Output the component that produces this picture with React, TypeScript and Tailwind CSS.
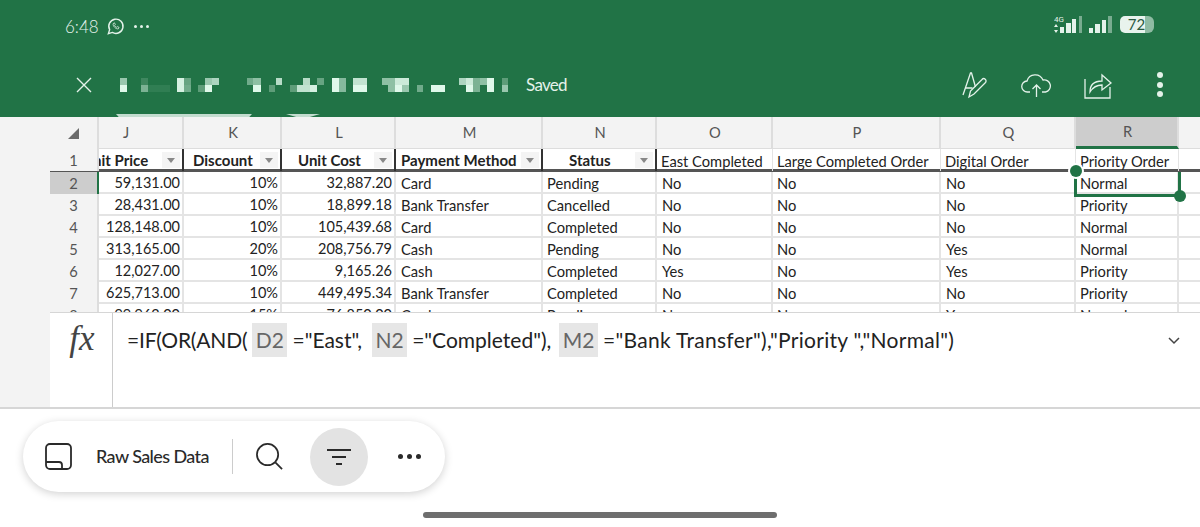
const columns = [
  { id: 'J', title: 'nit Price', filter: true, cls: '' },
  { id: 'K', title: 'Discount', filter: true, cls: 'pl-[9px]' },
  { id: 'L', title: 'Unit Cost', filter: true, cls: 'pl-[16px]' },
  { id: 'M', title: 'Payment Method', filter: true, cls: 'pl-[5px]' },
  { id: 'N', title: 'Status', filter: true, cls: 'pl-[26px]' },
  { id: 'O', title: 'East Completed', filter: false, cls: '' },
  { id: 'P', title: 'Large Completed Order', filter: false, cls: '' },
  { id: 'Q', title: 'Digital Order', filter: false, cls: '' },
  { id: 'R', title: 'Priority Order', filter: false, cls: '' },
];

const rows = [
  ['59,131.00', '10%', '32,887.20', 'Card', 'Pending', 'No', 'No', 'No', 'Normal'],
  ['28,431.00', '10%', '18,899.18', 'Bank Transfer', 'Cancelled', 'No', 'No', 'No', 'Priority'],
  ['128,148.00', '10%', '105,439.68', 'Card', 'Completed', 'No', 'No', 'No', 'Normal'],
  ['313,165.00', '20%', '208,756.79', 'Cash', 'Pending', 'No', 'No', 'Yes', 'Normal'],
  ['12,027.00', '10%', '9,165.26', 'Cash', 'Completed', 'Yes', 'No', 'Yes', 'Priority'],
  ['625,713.00', '10%', '449,495.34', 'Bank Transfer', 'Completed', 'No', 'No', 'No', 'Priority'],
  ['99,962.00', '15%', '76,850.00', 'Card', 'Pending', 'No', 'No', 'Yes', 'Normal'],
];

const gridCols = 'grid grid-cols-[49px_85px_98px_114px_147px_114px_116px_168px_135px_103px_1fr]';

function FilterButton() {
  return (
    <span className="absolute right-[2px] top-[3px] flex h-[16px] w-[18px] items-center justify-center bg-[#f4f4f4]">
      <span className="h-0 w-0 border-x-[4px] border-t-[5px] border-x-transparent border-t-[#888]" />
    </span>
  );
}

function Sheet() {
  return (
    <div className="h-[195px] overflow-hidden bg-white text-[14.7px] text-[#222]">
      <div className={`${gridCols} h-[32px] bg-[#f3f3f3] text-[#555]`}>
        <div className="flex items-center justify-center border-r-2 border-[#ddd]">
          <span className="h-0 w-0 border-b-[11px] border-l-[11px] border-b-[#6b6b6b] border-l-transparent" />
        </div>
        {columns.map((c) => (
          <div
            key={c.id}
            className={`flex items-center border-r-2 border-[#ddd] ${c.id === 'J' ? 'justify-start pl-[24px]' : 'justify-center pl-[2px]'} ${c.id === 'R' ? 'border-b-[3px] border-b-[#217346] bg-[#cdcdcd]' : 'border-b border-b-[#ddd]'}`}
          >
            {c.id}
          </div>
        ))}
        <div className="border-b border-[#ddd]" />
      </div>

      <div className={`${gridCols} h-[23px] border-b-[3px] border-[#555]`}>
        <div className="flex items-center justify-center border-r-2 border-[#ddd] bg-[#f3f3f3] text-[#555]">1</div>
        {columns.map((c) => (
          <div
            key={c.id}
            className={`relative flex items-center overflow-hidden whitespace-nowrap ${c.filter ? 'border-r-2 border-[#333] text-[15px] font-bold' : 'border-r border-[#e4e4e4] pl-[4px] pt-[2px]'} ${c.cls}`}
          >
            <span className={c.id === 'J' ? '-ml-[6px]' : ''}>{c.title}</span>
            {c.filter && <FilterButton />}
          </div>
        ))}
        <div />
      </div>

      {rows.map((row, i) => (
        <div key={i} className={`${gridCols} h-[22px] border-b-2 border-[#e4e4e4]`}>
          <div className={`flex items-center justify-center border-r-2 border-[#ddd] text-[#555] ${i === 0 ? 'bg-[#cdcdcd]' : 'bg-[#f3f3f3]'}`}>
            {i + 2}
          </div>
          {row.map((v, j) => (
            <div
              key={j}
              className={`relative flex items-center whitespace-nowrap border-r-2 border-[#e4e4e4] ${j < 3 ? 'justify-end pr-[2px] text-[14.5px]' : j === 3 || j === 5 || j === 7 ? 'pl-[5px]' : 'pl-[4px]'}`}
            >
              {v}
              {i === 0 && j === 0 && <span className="absolute -left-[2px] bottom-0 top-0 z-10 w-[2px] bg-[#217346]" />}
              {i === 0 && j === 8 && (
                <>
                  <span className="absolute -bottom-[3px] -left-[2px] -right-[4px] top-0 z-10 border-x-[3px] border-b-[3px] border-[#217346]" />
                  <span className="absolute -bottom-[8px] -right-[9px] z-10 h-[12px] w-[12px] rounded-full bg-[#217346]" />
                  <span className="absolute -left-[6px] -top-[7px] z-10 h-[12px] w-[12px] rounded-full bg-[#217346] ring-2 ring-white" />
                </>
              )}
            </div>
          ))}
          <div />
        </div>
      ))}
    </div>
  );
}

function Ref({ children }: { children: string }) {
  return <span className="mx-[5px] inline-block h-[34px] bg-[#e6e6e6] px-[3.500px] leading-[34px] text-[#666]">{children}</span>;
}

function FormulaBar() {
  return (
    <div className="flex h-[95px] items-start border-t border-[#d6d6d6] bg-white">
      <div className="flex h-full w-[63px] items-start justify-center border-r border-[#ccc] pl-[2px] pt-[4px] font-['Liberation_Serif',serif] text-[35px] italic leading-[44px] text-[#444]">
        fx
      </div>
      <div className="mt-[10px] flex h-[34px] flex-1 items-center whitespace-pre pl-[14px] font-['Lato',sans-serif] text-[21px] leading-[34px] text-[#222]">
        <span className="tracking-[-0.2px]">=IF(OR(AND(</span>
        <Ref>D2</Ref>
        <span className="mr-[5px]">="East",</span>
        <Ref>N2</Ref>
        <span className="mr-[3px]">="Completed"),</span>
        <Ref>M2</Ref>
        <span className="tracking-[0.3px]">="Bank Transfer"),"Priority ","Normal")</span>
        <svg className="ml-auto mr-[19px]" width="14" height="14" viewBox="0 0 14 14" fill="none" stroke="#444" strokeWidth="1.5">
          <path d="M2 5l5 5 5-5" />
        </svg>
      </div>
    </div>
  );
}

function TitleBlur() {
  // pixelated file name: x, y, w, h, opacity
  const blocks: [number, number, number, number, number][] = [
    [120, 78, 7, 7, 0.6], [120, 85, 7, 7, 0.95], [141, 78, 7, 7, 0.15], [141, 85, 7, 7, 0.45], [148, 85, 22, 7, 0.08],
    [177, 78, 7, 14, 0.9], [184, 78, 7, 7, 0.35], [184, 85, 7, 7, 0.4], [198, 85, 7, 7, 0.3], [205, 78, 7, 7, 0.6], [205, 85, 7, 7, 0.95], [212, 78, 7, 7, 0.7],
    [247, 78, 6, 7, 0.4], [253, 78, 8, 7, 0.55], [253, 85, 8, 7, 0.95], [269, 85, 6, 7, 0.3], [276, 78, 6, 7, 0.75],
    [290, 85, 7, 7, 0.3], [297, 85, 6, 7, 0.8], [303, 78, 7, 7, 0.75], [303, 85, 7, 7, 0.8], [310, 85, 7, 7, 0.9], [317, 78, 7, 7, 0.35],
    [332, 78, 7, 14, 0.95], [339, 78, 7, 14, 0.5], [353, 78, 14, 7, 0.8], [353, 85, 14, 7, 0.95],
    [382, 78, 13, 7, 0.55], [395, 78, 14, 7, 0.85], [388, 85, 7, 7, 0.55], [395, 85, 7, 7, 0.95], [402, 85, 7, 7, 0.6],
    [417, 85, 6, 7, 0.4], [431, 85, 14, 7, 0.95], [459, 78, 7, 7, 0.7], [466, 78, 7, 7, 0.85], [466, 85, 7, 7, 0.95], [473, 78, 7, 14, 0.45], [480, 78, 7, 7, 0.55], [487, 78, 7, 14, 0.95],
    [502, 78, 6, 7, 0.3], [502, 85, 6, 7, 0.6],
  ];
  return (
    <svg width="400" height="18" viewBox="118 76 400 18" className="ml-[25px]">
      {blocks.map(([x, y, w, h, o], i) => (
        <rect key={i} x={x} y={y} width={w} height={h} fill="#eafff3" opacity={o} />
      ))}
    </svg>
  );
}

function Header() {
  return (
    <div className="relative h-[117px] bg-[#217346] text-[#e4f2ea]">
      <div className="flex h-[52px] items-start pl-[65px] pr-[46px] pt-[15px]">
        <div className="mt-[2px] flex items-center gap-[7px] text-[17px] leading-none">
          <span className="font-['Lato',sans-serif] font-light">6:48</span>
          <svg width="19" height="19" viewBox="0 0 24 24" fill="none" stroke="currentColor" strokeWidth="1.800">
            <path d="M3 21l1.600-5A9 9 0 1 1 8 19.500L3 21z" />
            <path d="M9 8.500c-.5 3 3.500 7 6.500 6.500l1-1.800-2.300-1.200-1 1c-1-.4-2-1.400-2.400-2.400l1-1-1.200-2.300L9 8.500z" strokeWidth="1" />
          </svg>
          <span className="flex gap-[3px] pl-[2px]">
            <i className="h-[3px] w-[3px] rounded-full bg-current" />
            <i className="h-[3px] w-[3px] rounded-full bg-current" />
            <i className="h-[3px] w-[3px] rounded-full bg-current" />
          </span>
        </div>
        <div className="ml-auto flex items-start gap-[6px]">
          <svg width="60" height="18" viewBox="0 0 60 18">
            <text x="0" y="7" fontSize="8" fill="#e4f2ea" fontFamily="Roboto, sans-serif">4G</text>
            <path d="M2 9l2 3H0zM2 18l-2-3h4z" fill="#e4f2ea" />
            <g fill="#e4f2ea">
              <rect x="6" y="12" width="4" height="6" /><rect x="12" y="8" width="5" height="10" /><rect x="18" y="4" width="4" height="14" />
              <rect x="25" y="1" width="3" height="17" opacity="0.45" />
              <rect x="35" y="13" width="4" height="5" /><rect x="41" y="9" width="5" height="9" /><rect x="48" y="5" width="4" height="13" />
              <rect x="54" y="1" width="4" height="17" opacity="0.45" />
            </g>
          </svg>
          <div className="mt-[1px] flex items-center">
            <span className="flex h-[17px] w-[25px] items-center justify-center rounded-l-[5px] bg-[#e8f3ed] pl-[8px] text-[15px] text-[#2a5a41]">72</span>
            <span className="h-[17px] w-[9px] rounded-r-[6px] bg-[#8fbba3]" />
          </div>
        </div>
      </div>
      <div className="flex h-[65px] items-center pr-[37px]">
        <svg className="ml-[75px]" width="18" height="18" viewBox="0 0 18 18" stroke="#e4f2ea" strokeWidth="1.400">
          <path d="M2 2l14 14M16 2L2 16" />
        </svg>
        <TitleBlur />
        <span className="ml-[8px] font-['Lato',sans-serif] text-[17px] leading-[18px] tracking-[-0.7px]">Saved</span>
        <div className="ml-auto flex items-center gap-[32px]">
          <svg width="28" height="28" viewBox="0 0 28 28" fill="none" stroke="currentColor" strokeWidth="1.300">
            <path d="M2 24L9.500 2h1l4 14M4.500 17h7" />
            <path d="M8 26l1.500-6L21 8.500a2 2 0 0 1 3.500 3L13 23l-5 3z" />
          </svg>
          <svg className="mt-[3px]" width="31" height="24" viewBox="0 0 31 24" fill="none" stroke="currentColor" strokeWidth="1.300">
            <path d="M9 18H6.500a5.500 5.500 0 0 1-.5-11A8.500 8.500 0 0 1 22 6a6 6 0 0 1 2.500 12H21" />
            <path d="M15.500 23V11M11.500 15l4-4 4 4" />
          </svg>
          <svg width="29" height="28" viewBox="0 0 29 28" fill="none" stroke="currentColor" strokeWidth="1.300">
            <path d="M1 8v19h25V16" />
            <path d="M6 21c0-8 5-11 12-11V4l9 8-9 7v-5c-5 0-9 2-12 7z" />
          </svg>
          <span className="flex flex-col gap-[3.500px] pl-[12px]">
            <i className="h-[6px] w-[6px] rounded-full bg-current" />
            <i className="h-[6px] w-[6px] rounded-full bg-current" />
            <i className="h-[6px] w-[6px] rounded-full bg-current" />
          </span>
        </div>
      </div>
      <span className="absolute bottom-0 left-[116px] h-[3px] w-[136px] bg-[#c3dccf] [clip-path:polygon(0_0,100%_0,98%_100%,2%_100%)]" />
      <span className="absolute bottom-0 left-[286px] h-[3px] w-[34px] bg-[#c3dccf] [clip-path:polygon(0_0,100%_0,70%_100%,30%_100%)]" />
    </div>
  );
}

function BottomBar() {
  return (
    <div className="flex flex-1 flex-col items-start bg-white pl-[23px] pt-[12px]">
      <div className="flex h-[71px] w-[422px] items-center rounded-full bg-white pl-[22px] shadow-[0_2px_8px_rgba(0,0,0,0.18)]">
        <svg width="27" height="27" viewBox="0 0 27 27" fill="none" stroke="#2a2a2a" strokeWidth="1.800">
          <rect x="1" y="1" width="25" height="25" rx="4" />
          <path d="M1 19h13c2 0 3 1 3 3v4" />
        </svg>
        <span className="ml-[24px] font-['Lato',sans-serif] text-[18px] font-medium tracking-[-0.6px] text-[#2a2a2a]">Raw Sales Data</span>
        <span className="ml-[23px] h-[35px] w-px bg-[#ccc]" />
        <svg className="ml-[22px]" width="29" height="29" viewBox="0 0 30 30" fill="none" stroke="#2a2a2a" strokeWidth="1.800">
          <circle cx="13" cy="13" r="11" />
          <path d="M21 21l7 7" />
        </svg>
        <span className="ml-[26px] flex h-[58px] w-[58px] items-center justify-center rounded-full bg-[#e3e3e3]">
          <svg width="26" height="20" viewBox="0 0 26 20" fill="none" stroke="#2a2a2a" strokeWidth="1.800">
            <path d="M1 3h24M6 10h14M10 17h6" />
          </svg>
        </span>
        <span className="ml-[30px] flex gap-[4px]">
          <i className="h-[5px] w-[5px] rounded-full bg-[#2a2a2a]" />
          <i className="h-[5px] w-[5px] rounded-full bg-[#2a2a2a]" />
          <i className="h-[5px] w-[5px] rounded-full bg-[#2a2a2a]" />
        </span>
      </div>
      <div className="mr-[23px] mt-[20px] h-[6px] w-[354px] self-center rounded-full bg-[#6e6e6e]" />
    </div>
  );
}

export default function App() {
  return (
    <div className="flex h-[527px] w-[1200px] flex-col overflow-hidden bg-white font-['Lato',sans-serif]">
      <Header />
      <div className="flex border-b-2 border-[#d6d6d6]">
        <div className="w-[50px] bg-[#f3f3f3]" />
        <div className="flex-1">
          <Sheet />
          <FormulaBar />
        </div>
      </div>
      <BottomBar />
    </div>
  );
}
